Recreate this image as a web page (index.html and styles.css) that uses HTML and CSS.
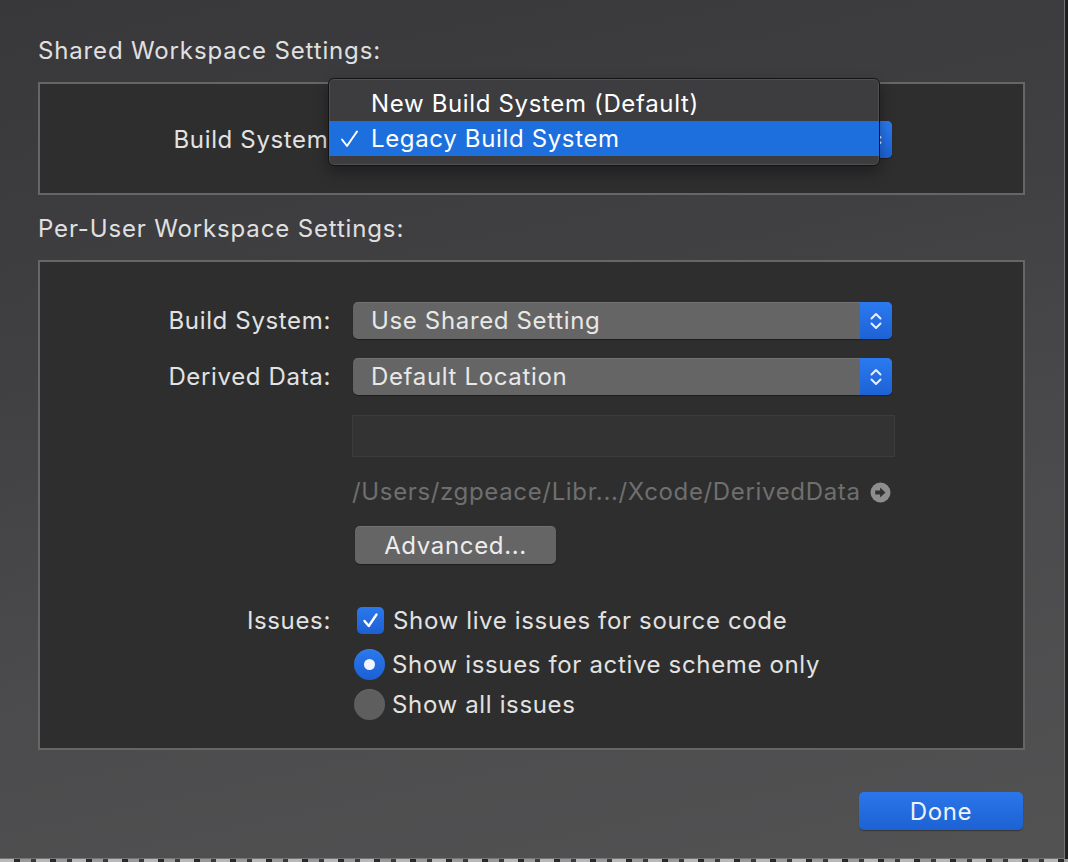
FILE: index.html
```html
<!DOCTYPE html>
<html lang="en">
<head>
<meta charset="utf-8">
<title>Workspace Settings</title>
<link rel="stylesheet" href="styles.css">
</head>
<body>
<div class="window">
  <div class="section-title">Shared Workspace Settings:</div>
  <div class="group group-shared">
    <div class="row row-shared">
      <div class="label">Build System:</div>
      <div class="popup">
        <span class="popup-text">Legacy Build System</span>
        <span class="stepper">
          <svg width="14" height="24" viewBox="0 0 14 24"><path d="M2.5 9.5 L7 5 L11.5 9.5 M2.5 14.5 L7 19 L11.5 14.5" fill="none" stroke="#e9effc" stroke-width="2" stroke-linecap="round" stroke-linejoin="round"/></svg>
        </span>
      </div>
    </div>
    <div class="menu">
      <div class="menu-item"><span class="check"></span>New Build System (Default)</div>
      <div class="menu-item selected"><span class="check"><svg width="19" height="20" viewBox="0 0 19 20"><path d="M2 10.5 L7 17 L17 2.5" fill="none" stroke="#ffffff" stroke-width="2" stroke-linecap="round" stroke-linejoin="round"/></svg></span>Legacy Build System</div>
    </div>
  </div>

  <div class="section-title title-user">Per-User Workspace Settings:</div>
  <div class="group group-user">
    <div class="row row-build">
      <div class="label">Build System:</div>
      <div class="popup">
        <span class="popup-text">Use Shared Setting</span>
        <span class="stepper">
          <svg width="14" height="24" viewBox="0 0 14 24"><path d="M2.5 9.5 L7 5 L11.5 9.5 M2.5 14.5 L7 19 L11.5 14.5" fill="none" stroke="#e9effc" stroke-width="2" stroke-linecap="round" stroke-linejoin="round"/></svg>
        </span>
      </div>
    </div>
    <div class="row row-derived">
      <div class="label">Derived Data:</div>
      <div class="popup">
        <span class="popup-text">Default Location</span>
        <span class="stepper">
          <svg width="14" height="24" viewBox="0 0 14 24"><path d="M2.5 9.5 L7 5 L11.5 9.5 M2.5 14.5 L7 19 L11.5 14.5" fill="none" stroke="#e9effc" stroke-width="2" stroke-linecap="round" stroke-linejoin="round"/></svg>
        </span>
      </div>
    </div>
    <div class="row row-field">
      <div class="label"></div>
      <div class="textfield"></div>
    </div>
    <div class="row row-path">
      <div class="label"></div>
      <div class="path">
        <span class="path-text">/Users/zgpeace/Libr.../Xcode/DerivedData</span>
        <svg class="reveal" width="21" height="21" viewBox="0 0 20 20"><circle cx="10" cy="10" r="9.5" fill="#8e8e8e"/><path d="M5 8.2 H9.6 V5.2 L14.8 10 L9.6 14.8 V11.8 H5 Z" fill="#323232"/></svg>
      </div>
    </div>
    <div class="row row-advanced">
      <div class="label"></div>
      <div class="button">Advanced...</div>
    </div>
    <div class="row row-check">
      <div class="label">Issues:</div>
      <div class="option">
        <span class="checkbox"><svg width="27" height="27" viewBox="0 0 27 27"><path d="M7.5 14 L11.8 19 L19.5 7.5" fill="none" stroke="#ffffff" stroke-width="2.4" stroke-linecap="round" stroke-linejoin="round"/></svg></span>
        <span class="option-text">Show live issues for source code</span>
      </div>
    </div>
    <div class="row row-radio1">
      <div class="label"></div>
      <div class="option">
        <span class="radio on"><span class="dot"></span></span>
        <span class="option-text">Show issues for active scheme only</span>
      </div>
    </div>
    <div class="row row-radio2">
      <div class="label"></div>
      <div class="option">
        <span class="radio"></span>
        <span class="option-text">Show all issues</span>
      </div>
    </div>
  </div>

  <div class="footer">
    <div class="done">Done</div>
  </div>
</div>
<div class="desk-strip"></div>
</body>
</html>
```

FILE: styles.css
```css
html, body {
  margin: 0;
  padding: 0;
}
body {
  width: 1068px;
  height: 862px;
  overflow: hidden;
  background: #1f1f1f;
  font-family: "Inter", "Noto Sans", "Liberation Sans", sans-serif;
  font-size: 24px;
  letter-spacing: 0.65px;
  color: #e2e2e2;
  position: relative;
}
.window {
  box-sizing: border-box;
  width: 1065px;
  height: 859px;
  border-right: 1px solid #747474;
  border-bottom: 1px solid #747474;
  padding: 0 39px 0 38px;
  background: linear-gradient(168deg, #38373a 0%, #403f42 35%, #4b4a4c 65%, #525253 100%);
  display: flex;
  flex-direction: column;
}
.desk-strip {
  height: 3px;
  background: repeating-linear-gradient(90deg, #b8b8b8 0 14px, #2a2a2a 14px 20px, #9a9a9a 20px 31px, #3a3a3a 31px 36px);
}
.section-title {
  line-height: 28px;
  margin-top: 37px;
  color: #e0e0e0;
  letter-spacing: 0.85px;
}
.title-user {
  margin-top: 20px;
}
.group {
  box-sizing: border-box;
  border: 2px solid #666667;
  background: #2e2e2e;
  margin-top: 17px;
  position: relative;
}
.group-shared {
  height: 113px;
  padding-top: 37px;
}
.group-user {
  height: 490px;
  padding-top: 40px;
}
.row {
  display: flex;
  align-items: center;
  gap: 22px;
}
.label {
  width: 291px;
  flex: none;
  text-align: right;
  color: #e2e2e2;
}
.row-shared {
  gap: 17px;
}
.row-shared .label {
  width: 296px;
}
.popup {
  box-sizing: border-box;
  width: 539px;
  height: 37px;
  border-radius: 5px;
  background: #656565;
  box-shadow: inset 0 1px 0 rgba(255,255,255,0.08), 0 1px 1px rgba(0,0,0,0.35);
  display: flex;
  align-items: center;
  overflow: hidden;
}
.popup-text {
  flex: 1;
  padding-left: 18px;
  color: #e8e8e8;
}
.stepper {
  width: 32px;
  height: 100%;
  background: linear-gradient(#2b7af0, #1d62d5);
  display: flex;
  align-items: center;
  justify-content: center;
}
.menu {
  position: absolute;
  left: 288px;
  top: -6px;
  box-sizing: border-box;
  width: 552px;
  height: 88px;
  padding-top: 7px;
  border-radius: 6px;
  border: 1px solid #141414;
  background: #3d3c3f;
  box-shadow: inset 0 0 0 1px rgba(255,255,255,0.1), 0 6px 14px rgba(0,0,0,0.35);
}
.menu-item {
  height: 35px;
  display: flex;
  align-items: center;
  color: #ffffff;
}
.menu-item.selected {
  background: #1d6fdd;
}
.check {
  width: 42px;
  flex: none;
  padding-left: 11px;
  box-sizing: border-box;
  display: flex;
  align-items: center;
}
.row-derived { margin-top: 19px; }
.row-field { margin-top: 20px; }
.textfield {
  box-sizing: border-box;
  width: 543px;
  height: 42px;
  margin-left: -1px;
  background: #333333;
  border: 1px solid #3c3c3c;
}
.row-path { margin-top: 21px; }
.path {
  display: flex;
  align-items: center;
  margin-left: -1px;
  height: 26px;
}
.path-text {
  color: #6f6f6f;
}
.reveal {
  margin-left: 9px;
  margin-top: 3px;
}
.row-advanced { margin-top: 22px; }
.button {
  margin-left: 2px;
  width: 201px;
  height: 38px;
  box-sizing: border-box;
  border-radius: 5px;
  background: #656565;
  box-shadow: inset 0 1px 0 rgba(255,255,255,0.08), 0 1px 1px rgba(0,0,0,0.35);
  display: flex;
  align-items: center;
  justify-content: center;
  color: #ededed;
}
.row-check { margin-top: 41px; height: 30px; }
.row-radio1 { margin-top: 14px; height: 30px; }
.row-radio2 { margin-top: 10px; height: 30px; }
.option {
  display: flex;
  align-items: center;
}
.option-text {
  color: #e2e2e2;
}
.checkbox {
  width: 27px;
  height: 27px;
  margin-left: 4px;
  margin-right: 9px;
  border-radius: 5px;
  background: linear-gradient(#2b78ee, #1c60d3);
  display: flex;
}
.radio {
  width: 31px;
  height: 31px;
  margin-left: 1px;
  margin-right: 7px;
  border-radius: 50%;
  background: #5e5e5e;
  box-shadow: inset 0 1px 0 rgba(255,255,255,0.08);
  display: flex;
  align-items: center;
  justify-content: center;
}
.radio.on {
  background: linear-gradient(#2b78ee, #1c60d3);
}
.dot {
  width: 11px;
  height: 11px;
  border-radius: 50%;
  background: #f2f5ff;
}
.footer {
  margin-top: 42px;
  display: flex;
  justify-content: flex-end;
  padding-right: 2px;
}
.done {
  width: 164px;
  height: 38px;
  border-radius: 5px;
  background: linear-gradient(#2a76ea, #1d62d3);
  box-shadow: 0 1px 1px rgba(0,0,0,0.35);
  display: flex;
  align-items: center;
  justify-content: center;
  color: #eef2fb;
}
```
